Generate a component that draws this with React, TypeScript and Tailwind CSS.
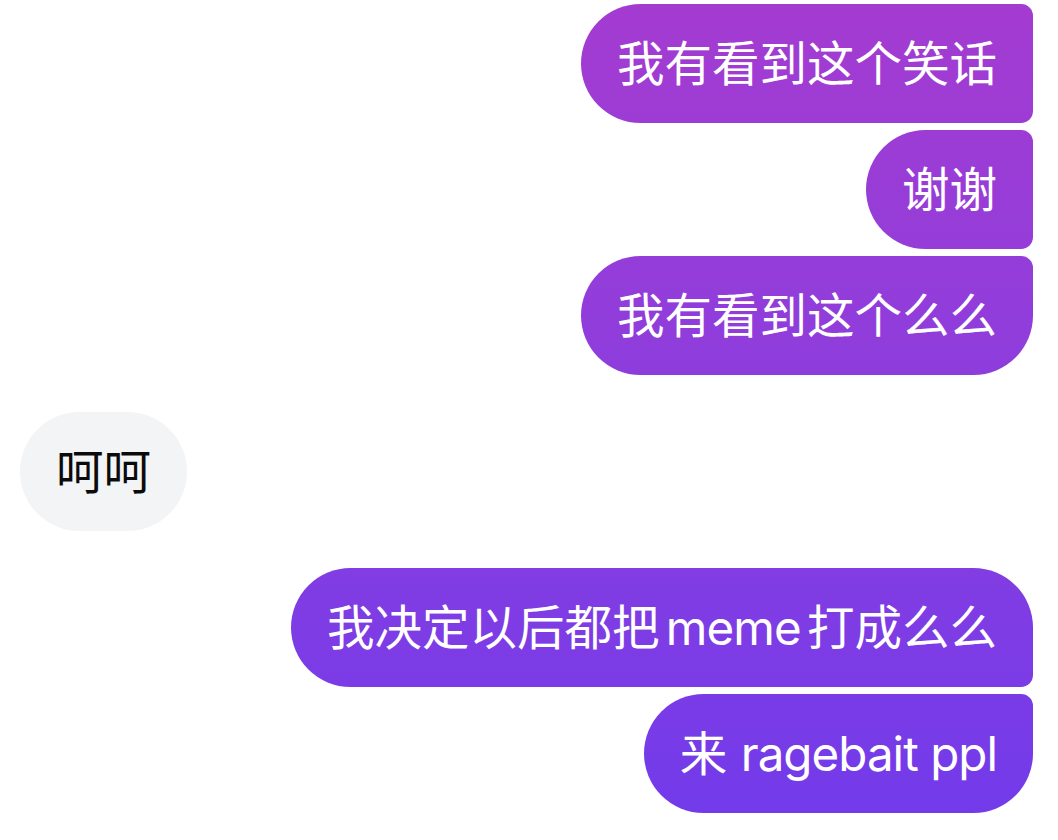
import type { ReactNode } from "react";

const font = { fontFamily: '"Inter", "Noto Sans CJK SC", sans-serif' };

type Msg = { id: string; content: ReactNode; corners: string };

const Latin = ({ children }: { children: ReactNode }) => (
  <span className="tracking-[-0.02em]">{children}</span>
);

const group1: Msg[] = [
  { id: "a", content: "我有看到这个笑话", corners: "rounded-tr-[12px] rounded-br-[12px]" },
  { id: "b", content: "谢谢", corners: "rounded-tr-[12px] rounded-br-[12px]" },
  { id: "c", content: "我有看到这个么么", corners: "rounded-tr-[12px] rounded-br-[60px]" },
];

const group2: Msg[] = [
  {
    id: "d",
    content: (
      <span className="[word-spacing:-7px]">
        我决定以后都把 <Latin>meme</Latin> 打成么么
      </span>
    ),
    corners: "rounded-tr-[60px] rounded-br-[12px]",
  },
  {
    id: "e",
    content: (
      <>
        来 <Latin>ragebait ppl</Latin>
      </>
    ),
    corners: "rounded-tr-[12px] rounded-br-[60px]",
  },
];

function Outgoing({ msg }: { msg: Msg }) {
  return (
    <div
      className={`self-end px-[36px] py-[30px] text-[47.5px] leading-[59px] text-white whitespace-nowrap rounded-tl-[60px] rounded-bl-[60px] bg-gradient-to-b from-[#a43bd1] to-[#713aeb] bg-fixed ${msg.corners}`}
    >
      {msg.content}
    </div>
  );
}

export default function App() {
  return (
    <div
      className="w-[1058px] h-[840px] bg-white flex flex-col pt-[4px] pl-[20px] pr-[25px] overflow-hidden"
      style={font}
    >
      <div className="flex flex-col gap-[7px]">
        {group1.map((m) => (
          <Outgoing key={m.id} msg={m} />
        ))}
      </div>
      <div className="mt-[37px] self-start px-[36px] py-[30px] text-[47.5px] leading-[59px] text-[#0b0b0b] bg-[#f3f4f6] rounded-[60px]">
        呵呵
      </div>
      <div className="mt-[37px] flex flex-col gap-[7px]">
        {group2.map((m) => (
          <Outgoing key={m.id} msg={m} />
        ))}
      </div>
    </div>
  );
}
